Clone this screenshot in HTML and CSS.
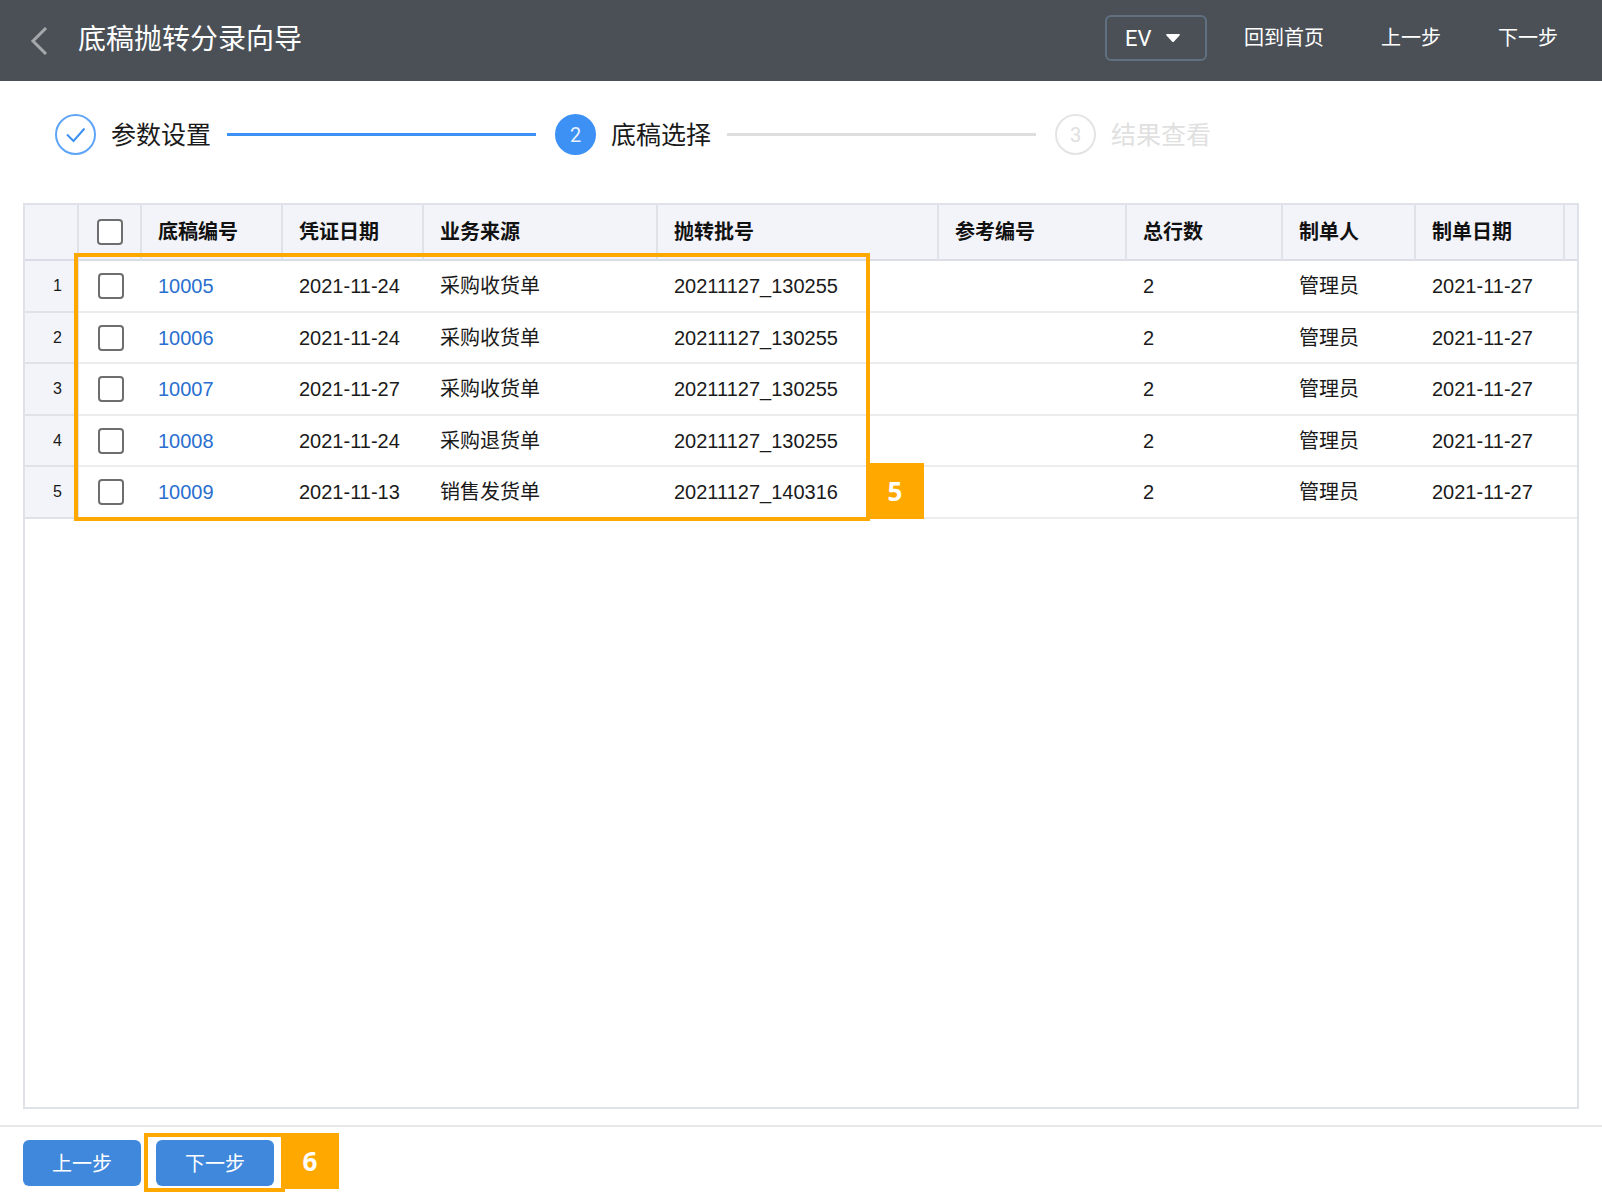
FILE: index.html
```html
<!DOCTYPE html>
<html lang="zh-CN">
<head>
    <meta charset="UTF-8">
    <meta name="viewport" content="width=device-width, initial-scale=1.0">
    <title>底稿抛转分录向导</title>
    <link rel="stylesheet" href="styles.css">
</head>
<body>
    <header class="topbar">
        <a class="back" href="#" aria-label="返回">
            <svg width="18" height="28" viewBox="0 0 18 28"><path d="M16 1 L3 14 L16 27" fill="none" stroke="#a5a8ab" stroke-width="3"/></svg>
        </a>
        <h1>底稿抛转分录向导</h1>
        <div class="company">
            <select aria-label="公司">
                <option>EV</option>
            </select>
            <svg class="caret" width="14" height="8" viewBox="0 0 14 8"><path d="M1 0 H13 Q14.500 0.500 13.500 1.500 L8 7.500 Q7 8.500 6 7.500 L0.500 1.500 Q-0.500 0.500 1 0 Z" fill="#fff"/></svg>
        </div>
        <nav>
            <a href="#">回到首页</a>
            <a href="#">上一步</a>
            <a href="#">下一步</a>
        </nav>
    </header>

    <ol class="steps">
        <li class="step done">
            <span class="circle">
                <svg width="20" height="16" viewBox="0 0 20 16"><path d="M1 7.500 L7.500 14 L18.500 1.500" fill="none" stroke="#3d91f5" stroke-width="2"/></svg>
            </span>
            <span class="label">参数设置</span>
            <span class="line"></span>
        </li>
        <li class="step current">
            <span class="circle">2</span>
            <span class="label">底稿选择</span>
            <span class="line"></span>
        </li>
        <li class="step waiting">
            <span class="circle">3</span>
            <span class="label">结果查看</span>
        </li>
    </ol>

    <main class="grid">
        <table>
            <colgroup>
                <col class="c-num">
                <col class="c-check">
                <col class="c-code">
                <col class="c-code">
                <col class="c-source">
                <col class="c-batch">
                <col class="c-ref">
                <col class="c-lines">
                <col class="c-user">
                <col class="c-date">
                <col>
            </colgroup>
            <thead>
                <tr>
                    <th></th>
                    <th class="check"><input type="checkbox" aria-label="全选"></th>
                    <th>底稿编号</th>
                    <th>凭证日期</th>
                    <th>业务来源</th>
                    <th>抛转批号</th>
                    <th>参考编号</th>
                    <th>总行数</th>
                    <th>制单人</th>
                    <th>制单日期</th>
                    <th></th>
                </tr>
            </thead>
            <tbody>
                <tr>
                    <td class="num">1</td>
                    <td class="check"><input type="checkbox" aria-label="选择 10005"></td>
                    <td><a href="#">10005</a></td>
                    <td>2021-11-24</td>
                    <td>采购收货单</td>
                    <td>20211127_130255</td>
                    <td></td>
                    <td>2</td>
                    <td>管理员</td>
                    <td>2021-11-27</td>
                    <td></td>
                </tr>
                <tr>
                    <td class="num">2</td>
                    <td class="check"><input type="checkbox" aria-label="选择 10006"></td>
                    <td><a href="#">10006</a></td>
                    <td>2021-11-24</td>
                    <td>采购收货单</td>
                    <td>20211127_130255</td>
                    <td></td>
                    <td>2</td>
                    <td>管理员</td>
                    <td>2021-11-27</td>
                    <td></td>
                </tr>
                <tr>
                    <td class="num">3</td>
                    <td class="check"><input type="checkbox" aria-label="选择 10007"></td>
                    <td><a href="#">10007</a></td>
                    <td>2021-11-27</td>
                    <td>采购收货单</td>
                    <td>20211127_130255</td>
                    <td></td>
                    <td>2</td>
                    <td>管理员</td>
                    <td>2021-11-27</td>
                    <td></td>
                </tr>
                <tr>
                    <td class="num">4</td>
                    <td class="check"><input type="checkbox" aria-label="选择 10008"></td>
                    <td><a href="#">10008</a></td>
                    <td>2021-11-24</td>
                    <td>采购退货单</td>
                    <td>20211127_130255</td>
                    <td></td>
                    <td>2</td>
                    <td>管理员</td>
                    <td>2021-11-27</td>
                    <td></td>
                </tr>
                <tr>
                    <td class="num">5</td>
                    <td class="check"><input type="checkbox" aria-label="选择 10009"></td>
                    <td><a href="#">10009</a></td>
                    <td>2021-11-13</td>
                    <td>销售发货单</td>
                    <td>20211127_140316</td>
                    <td></td>
                    <td>2</td>
                    <td>管理员</td>
                    <td>2021-11-27</td>
                    <td></td>
                </tr>
            </tbody>
        </table>
        <div class="mark mark-rows"><span class="badge">5</span></div>
    </main>

    <footer class="actions">
        <button type="button">上一步</button>
        <div class="next">
            <button type="button">下一步</button>
            <div class="mark mark-next"><span class="badge">6</span></div>
        </div>
    </footer>
</body>
</html>
```
FILE: styles.css
```css
* {
    box-sizing: border-box;
}
body {
    font-family: "Liberation Sans", "Noto Sans CJK SC", sans-serif;
    font-size: 20px;
    line-height: 28px;
    color: #1a1a1a;
    display: flex;
    flex-direction: column;
    min-height: 100vh;
    margin: 0;
    background-color: #fff;
}
a {
    text-decoration: none;
}

/* top bar */
.topbar {
    display: flex;
    align-items: center;
    height: 81px;
    padding: 0 44px 5px 30px;
    background-color: #4a5056;
    color: #fff;
}
.back {
    display: flex;
    padding-top: 6px;
}
h1 {
    flex: 1;
    margin: 0 0 0 30px;
    padding-top: 4px;
    font-size: 28px;
    font-weight: normal;
    line-height: 40px;
}
.company {
    position: relative;
}
.company select {
    appearance: none;
    display: block;
    width: 102px;
    height: 46px;
    padding: 0 18px;
    border: 2px solid #607080;
    border-radius: 6px;
    background: transparent;
    color: #fff;
    font-family: Roboto, sans-serif;
    font-size: 22px;
}
.caret {
    position: absolute;
    right: 27px;
    top: 19px;
    pointer-events: none;
}
nav {
    display: flex;
    gap: 57px;
    margin-left: 37px;
}
nav a {
    color: #fff;
}

/* wizard steps */
.steps {
    display: flex;
    list-style: none;
    max-width: 1212px;
    margin: 0;
    padding: 33px 0 48px 55px;
}
.step {
    display: flex;
    align-items: center;
    flex: 1 1 343px;
}
.step:last-child {
    flex: none;
}
.circle {
    display: flex;
    justify-content: center;
    align-items: center;
    width: 41px;
    height: 41px;
    border: 2px solid #5fa5f7;
    border-radius: 50%;
    font-family: Roboto, sans-serif;
}
.label {
    margin: 0 16px 0 15px;
    font-size: 25px;
}
.line {
    flex: 1;
    height: 3px;
    margin-right: 19px;
    background-color: #3d91f5;
}
.current .circle {
    border-color: #3d91f5;
    background-color: #3d91f5;
    color: #e8f1fd;
}
.current .line {
    background-color: #dedede;
}
.waiting {
    color: #e0e0e0;
}
.waiting .circle {
    border-color: #e4e4e4;
}
.waiting .label {
    margin-right: 1px;
}

/* data grid */
.grid {
    position: relative;
    flex: 1;
    margin: 0 23px 16px;
    border: 2px solid #dfe2e9;
}
table {
    width: 100%;
    table-layout: fixed;
    border-collapse: separate;
    border-spacing: 0;
}
.c-num {
    width: 54px;
}
.c-check {
    width: 63px;
}
.c-code {
    width: 141px;
}
.c-source {
    width: 234px;
}
.c-batch {
    width: 281px;
}
.c-ref {
    width: 188px;
}
.c-lines {
    width: 156px;
}
.c-user {
    width: 133px;
}
.c-date {
    width: 149px;
}
th, td {
    padding: 0 0 0 16px;
    text-align: left;
    white-space: nowrap;
}
th {
    height: 56px;
    border-right: 2px solid #dfe2e9;
    border-bottom: 2px solid #dadde5;
    background-color: #f3f4f9;
    color: #111;
}
th:last-child {
    border-right: none;
}
td {
    height: 52px;
    border-bottom: 2px solid #ececee;
}
tr:nth-child(even) td {
    height: 51px;
}
td.num {
    padding: 0 15px 0 0;
    border-right: 2px solid #dfe2e9;
    border-bottom-color: #dfe2e9;
    background-color: #f3f4f9;
    font-size: 16px;
    text-align: right;
}
td a {
    color: #2a6fcf;
}
.check {
    padding: 0;
    text-align: center;
}
.check input {
    appearance: none;
    display: block;
    width: 26px;
    height: 26px;
    margin: 0 auto;
    border: 2px solid #6e6e6e;
    border-radius: 4px;
    background-color: #fff;
}

/* highlighted areas with their numbers */
.mark {
    position: absolute;
    border: 4px solid #ffa900;
    pointer-events: none;
}
.mark-rows {
    left: 49px;
    top: 48px;
    width: 796px;
    height: 268px;
}
.mark-next {
    left: -12px;
    top: -7px;
    width: 141px;
    height: 59px;
}
.badge {
    position: absolute;
    left: 100%;
    display: flex;
    justify-content: center;
    align-items: center;
    width: 58px;
    height: 56px;
    background-color: #ffa900;
    color: #fff;
    font-family: "Open Sans", sans-serif;
    font-size: 26px;
    font-weight: bold;
}
.mark-rows .badge {
    bottom: -2px;
}
.mark-next .badge {
    top: -4px;
}

/* bottom buttons */
.actions {
    display: flex;
    gap: 15px;
    padding: 13px 23px 14px;
    border-top: 2px solid #e8e8ea;
}
.next {
    position: relative;
}
button {
    display: block;
    width: 118px;
    height: 46px;
    padding: 0 0 2px;
    border: none;
    border-radius: 6px;
    background-color: #3f88dc;
    color: #fff;
    font-family: inherit;
    font-size: 20px;
    cursor: pointer;
}
button:hover {
    background-color: #5598e4;
}
```
